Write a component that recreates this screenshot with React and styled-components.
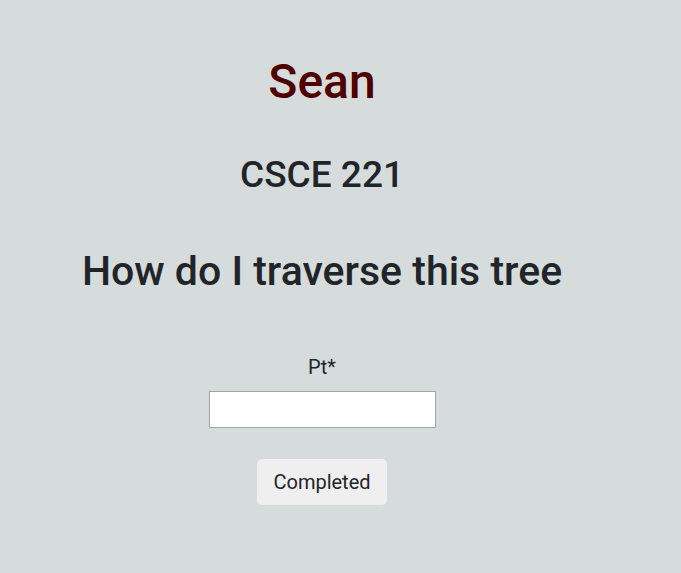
import React from "react";
import styled, { createGlobalStyle } from "styled-components";

const Global = createGlobalStyle`
  html, body { margin: 0; padding: 0; background: #d6dbdc; }
  body { font-family: Roboto, "Noto Sans", sans-serif; color: #212529; }
`;

const Page = styled.main`
  width: 644px;
  min-height: 573px;
  display: flex;
  flex-direction: column;
  align-items: center;
  text-align: center;
  padding-top: 58px;
  box-sizing: border-box;
`;

const Heading = styled.h1`
  margin: 0;
  font-weight: 500;
  font-size: ${(p) => p.$size}px;
  line-height: 1;
  white-space: nowrap;
  color: ${(p) => p.$color || "#212529"};
  margin-bottom: ${(p) => p.$gap || 0}px;
`;

const Form = styled.form`
  display: flex;
  flex-direction: column;
  align-items: center;
`;

const Label = styled.label`
  font-size: 20px;
  line-height: 20px;
  margin-bottom: 14px;
`;

const Input = styled.input`
  width: 227px;
  height: 37px;
  box-sizing: border-box;
  border: 1px solid #a3a3a3;
  background: #fff;
  padding: 2px 6px;
  font: inherit;
  outline: none;
`;

const Button = styled.button`
  margin-top: 31px;
  width: 130px;
  height: 46px;
  padding: 0;
  border: none;
  border-radius: 5px;
  background: #efefef;
  color: #212529;
  font-family: inherit;
  font-size: 20px;
  line-height: 1;
`;

export default function App() {
  return (
    <>
      <Global />
      <Page>
        <Heading $size={48} $color="#500000" $gap={50}>Sean</Heading>
        <Heading as="h2" $size={37} $gap={58}>CSCE 221</Heading>
        <Heading as="h2" $size={41} $gap={65}>How do I traverse this tree</Heading>
        <Form onSubmit={(e) => e.preventDefault()}>
          <Label htmlFor="pt">Pt*</Label>
          <Input id="pt" type="text" />
          <Button type="submit">Completed</Button>
        </Form>
      </Page>
    </>
  );
}
